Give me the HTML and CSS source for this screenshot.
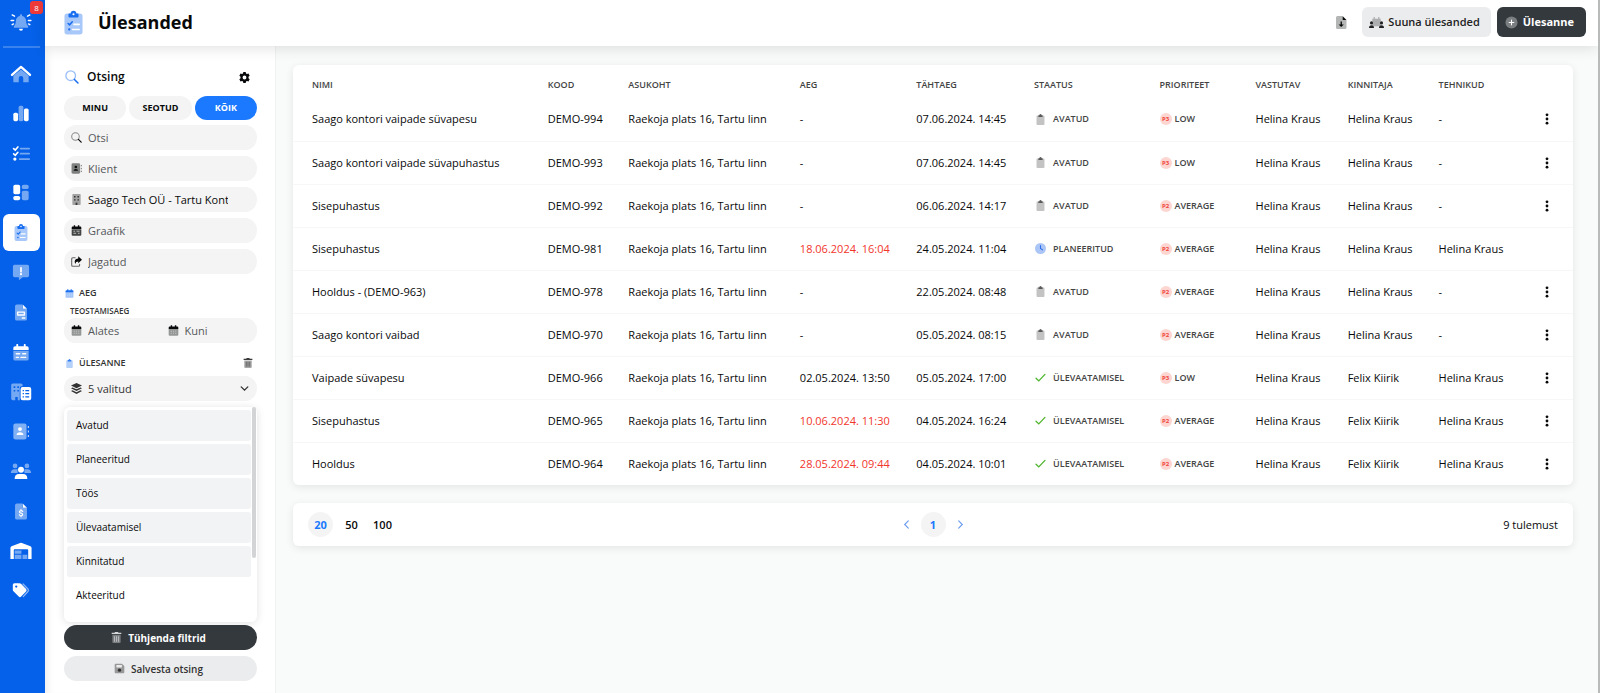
FILE: index.html
```
<!DOCTYPE html>
<html lang="et">
<head>
	<meta charset="UTF-8">
	<title>Ülesanded</title>
	<meta name="viewport" content="width=device-width, initial-scale=1.0">
	<link rel="stylesheet" href="styles.css">
</head>
<body>

	<!-- icon sprite -->
	<svg class="sprite" aria-hidden="true">
		<symbol id="i-bell" viewBox="0 0 24 20">
			<path opacity=".45" d="M12 1.500c.7 0 1.200.5 1.200 1.200v.6c2.700.5 4.500 2.700 4.500 5.400 0 3 .8 4.500 2 5.800.7.9.3 2-.9 2H5.200c-1.200 0-1.600-1.100-.9-2 1.200-1.300 2-2.800 2-5.800 0-2.700 1.800-4.900 4.500-5.400v-.6c0-.7.5-1.200 1.200-1.200z"/>
			<path d="M9.800 17.500h4.400a2.200 2.200 0 0 1-4.400 0z"/>
			<path d="M1 8.300h2.800M20.200 8.300H23M2.200 2.200l2.600 1.400M21.800 2.200l-2.600 1.400M2.200 13l1.500-.8M21.800 13l-1.500-.8" stroke="currentColor" stroke-width="1.600" stroke-linecap="round"/>
		</symbol>
		<symbol id="i-home" viewBox="0 0 24 20">
			<path opacity=".45" d="M12 5l8.500 7v7.300H14.500v-4.500a2.500 2.500 0 0 0-5 0v4.500h-6V12z"/>
			<path d="M2 11L12 2.200 22 11" fill="none" stroke="currentColor" stroke-width="2.600" stroke-linecap="round" stroke-linejoin="round"/>
		</symbol>
		<symbol id="i-chart" viewBox="0 0 20 20">
			<rect x="1" y="9" width="5.500" height="10" rx="1.800"/>
			<rect opacity=".45" x="7.200" y="1" width="5.600" height="18" rx="1.800"/>
			<rect x="13.500" y="4" width="5.500" height="15" rx="1.800"/>
		</symbol>
		<symbol id="i-list" viewBox="0 0 22 20">
			<path d="M2 4l2 1.800L7.200 2M2 10.500l2 1.800 3.200-3.800" fill="none" stroke="currentColor" stroke-width="2" stroke-linecap="round"/>
			<circle cx="3.500" cy="16.800" r="2"/>
			<path opacity=".45" d="M10.500 4H21M10.500 10.200H21M9.500 16.800H21" stroke="currentColor" stroke-width="2.200" stroke-linecap="round"/>
		</symbol>
		<symbol id="i-board" viewBox="0 0 20 20">
			<rect x="1" y="1" width="8" height="11" rx="2"/>
			<rect x="1" y="14" width="8" height="5" rx="2"/>
			<rect opacity=".45" x="11" y="1" width="8" height="5" rx="2"/>
			<rect opacity=".45" x="11" y="8" width="8" height="11" rx="2"/>
		</symbol>
		<symbol id="i-clip" viewBox="0 0 20 25">
			<rect opacity=".38" x=".5" y="3" width="19" height="22" rx="2.800"/>
			<path d="M7 3a3 3 0 0 1 6 0h1.500q.8 0 .8.800v2.400q0 1.100-1.100 1.100H5.800q-1.100 0-1.100-1.100V3.800q0-.8.8-.8z"/>
			<circle cx="10" cy="3.800" r="1.100" fill="#fff"/>
			<path d="M4.300 13.500l1.600 1.500 2.800-3.200" fill="none" stroke="currentColor" stroke-width="1.600" stroke-linecap="round"/>
			<circle cx="5.500" cy="19.800" r="1.200"/>
			<path d="M10.500 14.500H16M9 19.800h7" stroke="#fff" stroke-width="1.700" stroke-linecap="round"/>
		</symbol>
		<symbol id="i-bubble" viewBox="0 0 20 20">
			<path opacity=".45" d="M2.500 1h15q2 0 2 2v10.500q0 2-2 2H12L7.500 19v-3.500h-5q-2 0-2-2V3q0-2 2-2z"/>
			<path d="M10 4.500v4.500" stroke="currentColor" stroke-width="2" stroke-linecap="round"/>
			<circle cx="10" cy="12" r="1.300"/>
		</symbol>
		<symbol id="i-doc" viewBox="0 0 20 20">
			<path opacity=".45" d="M5 .5h6.500v5h5.500V17.500q0 2-2 2H5q-2 0-2-2v-15q0-2 2-2z"/>
			<path d="M12 .5l5 5h-5z"/>
			<path d="M6 9.500h8v3.500H6zM11.500 16.500h3" fill="none" stroke="currentColor" stroke-width="1.600" stroke-linejoin="round" stroke-linecap="round"/>
		</symbol>
		<symbol id="i-events" viewBox="0 0 20 20">
			<path opacity=".45" d="M1 8h18v9.500q0 2-2 2H3q-2 0-2-2z"/>
			<path d="M1 7V4.500q0-2 2-2h1.500V1a1 1 0 0 1 2.200 0v1.500h6.600V1a1 1 0 0 1 2.200 0v1.500H17q2 0 2 2V7z"/>
			<path d="M4.500 11.500h4M12 11.500h3.500M4.500 15.800h2.500M10 15.800h5.500" stroke="currentColor" stroke-width="1.600" stroke-linecap="round"/>
		</symbol>
		<symbol id="i-building" viewBox="0 0 26 22">
			<path opacity=".45" fill-rule="evenodd" d="M3 .5h10q2 0 2 2V4h-1.500Q11.500 4 11.500 6.500V21H9v-4H6v4H3q-2 0-2-2V2.500q0-2 2-2zM4 4v2h2V4zM8.500 4v2h2V4zM4 8.500v2h2v-2zM8.500 8.500v2h2v-2z"/>
			<path fill-rule="evenodd" d="M15 5h8q2.500 0 2.500 2.500v11q0 2.500-2.500 2.500h-8q-2.500 0-2.500-2.500v-11Q12.500 5 15 5zM15 8.500v1.500h1.600V8.500zM18.300 8.500v1.500H23V8.500zM15 12.300v1.500h1.600v-1.500zM18.300 12.300v1.500H23v-1.500zM15 16.100v1.500h1.600v-1.500zM18.300 16.100v1.500H23v-1.500z"/>
		</symbol>
		<symbol id="i-contact" viewBox="0 0 20 20">
			<rect opacity=".5" x="1" y=".5" width="15.500" height="19" rx="2.500"/>
			<circle cx="8.800" cy="7.200" r="2.300"/>
			<path d="M4.800 14.200q0-3.400 4-3.400t4 3.400z"/>
			<path opacity=".7" d="M18.700 3.500v2.500M18.700 8.800v2.500M18.700 14v2.500" stroke="currentColor" stroke-width="1.400"/>
		</symbol>
		<symbol id="i-users" viewBox="0 0 26 20">
			<g opacity=".45"><circle cx="6" cy="4" r="2.800"/><circle cx="20" cy="4" r="2.800"/><path d="M1 12.500q0-4.500 4.500-4.500H9v4.500zM25 12.500q0-4.500-4.500-4.500H17v4.500z"/></g>
			<circle cx="13" cy="8.500" r="3.500"/>
			<path d="M5.500 19.500q0-6 5-6h5q5 0 5 6z"/>
		</symbol>
		<symbol id="i-invoice" viewBox="0 0 20 20">
			<path opacity=".45" d="M5 .5h6.500v5H17v12q0 2-2 2H5q-2 0-2-2v-15q0-2 2-2z"/>
			<path d="M12 .5l5 5h-5z"/>
			<path d="M12 10q-.5-1-2-1t-1.800 1.300Q8.200 11.600 10 12t1.900 1.600q-.2 1.400-1.900 1.400t-2-1.200M10 7.800V9M10 15v1.200" fill="none" stroke="currentColor" stroke-width="1.400" stroke-linecap="round"/>
		</symbol>
		<symbol id="i-warehouse" viewBox="0 0 26 20">
			<path d="M.5 19.500V6.500q0-1.500 1.300-2L12 .5q1-.4 2 0l10.200 4q1.300.5 1.300 2v13h-4V9q0-1-1-1h-15q-1 0-1 1v10.500z"/>
			<path opacity=".45" d="M5.500 9.500h8v3.800h-8zM5.500 14.500h8v5h-8zM14.800 14.500h5.700v5h-5.700z"/>
		</symbol>
		<symbol id="i-tag" viewBox="0 0 22 20">
			<path fill-rule="evenodd" d="M1 3q0-2 2-2h6q1.200 0 2 .8l6.200 6.400q1.400 1.500 0 3l-6 6.200q-1.500 1.400-3 0L1.800 11Q1 10.200 1 9zM5.200 3.800a1.400 1.400 0 1 0 0 2.800 1.400 1.400 0 0 0 0-2.800z"/>
			<path opacity=".55" d="M13.500 2l6 6.200q1.400 1.500 0 3l-5.700 6.300" fill="none" stroke="currentColor" stroke-width="1.500" stroke-linecap="round"/>
		</symbol>
		<symbol id="i-search" viewBox="0 0 16 16">
			<circle opacity=".45" cx="6.500" cy="6.500" r="5.500" fill="none" stroke="currentColor" stroke-width="1.500"/>
			<path d="M10.800 10.800l4 4" stroke="currentColor" stroke-width="1.800" stroke-linecap="round"/>
		</symbol>
		<symbol id="i-gear" viewBox="0 0 16 16">
			<path fill-rule="evenodd" d="M6.300 0h3.400l.5 2.200 1.400.8 2.200-.7 1.700 3-1.700 1.500v2.400l1.700 1.500-1.700 3-2.200-.7-1.400.8-.5 2.200H6.300l-.5-2.200-1.400-.8-2.200.7-1.700-3 1.700-1.500V6.800L.5 5.300l1.700-3 2.200.7 1.400-.8zM8 5.200a2.800 2.800 0 1 0 0 5.600 2.800 2.800 0 0 0 0-5.600z"/>
		</symbol>
		<symbol id="i-flat" viewBox="0 0 16 16">
			<path opacity=".35" fill-rule="evenodd" d="M3 0h10q1 0 1 1v14q0 1-1 1H9.500v-3.500h-3V16H3q-1 0-1-1V1q0-1 1-1z"/>
			<path opacity=".8" d="M4.500 3h2v2h-2zM9.500 3h2v2h-2zM4.500 7.500h2v2h-2zM9.500 7.500h2v2h-2zM6.500 12.500h3V16h-3z"/>
		</symbol>
		<symbol id="i-schedule" viewBox="0 0 16 16">
			<path opacity=".75" d="M1 6.500h14V14q0 1.500-1.500 1.500h-11Q1 15.500 1 14z"/>
			<path d="M1 6V3.500Q1 2 2.500 2H4V.5h2V2h4V.5h2V2h1.500Q15 2 15 3.500V6z"/>
			<path d="M3.500 9H6M8 9h4.500M3.500 12h4M10 12h2.500" stroke="#ccc" stroke-width="1.300"/>
		</symbol>
		<symbol id="i-cal" viewBox="0 0 16 16">
			<path opacity=".4" d="M1 6.500h14V14q0 1.500-1.500 1.500h-11Q1 15.500 1 14z"/>
			<path d="M1 6V3.500Q1 2 2.500 2H4V.5h2V2h4V.5h2V2h1.500Q15 2 15 3.500V6z"/>
			<path d="M4 9h8M4 12h8" stroke="#fff" stroke-opacity=".5" stroke-width="1.300" stroke-dasharray="1.600 1.600"/>
		</symbol>
		<symbol id="i-share" viewBox="0 0 16 16">
			<path opacity=".6" d="M6 2.500H2.500Q1 2.500 1 4v9.500Q1 15 2.500 15H11q1.500 0 1.500-1.500V12" fill="none" stroke="currentColor" stroke-width="1.600" stroke-linecap="round"/>
			<path d="M10.500.5L16 5.500l-5.500 5V8Q7 8 6 11.500 3.500 4 10.500 3.500z"/>
		</symbol>
		<symbol id="i-trash" viewBox="0 0 16 16">
			<path opacity=".35" d="M2 4h12v10.500q0 1.500-1.500 1.500h-9Q2 16 2 14.500z"/>
			<path opacity=".8" d="M1 1.200h4L6 0h4l1 1.200h4V3H1z"/>
			<path opacity=".55" d="M4.500 6h1.200v8H4.500zM7.400 6h1.200v8H7.400zM10.300 6h1.200v8h-1.200z"/>
		</symbol>
		<symbol id="i-layers" viewBox="0 0 16 16">
			<path d="M8 0l8 3.800-8 3.800L0 3.800z"/>
			<path d="M2.200 6.500L8 9.200l5.800-2.700L16 7.600l-8 3.900-8-3.900zM2.200 10.700L8 13.400l5.800-2.700 2.200 1.100L8 16l-8-4.200z"/>
		</symbol>
		<symbol id="i-save" viewBox="0 0 16 16">
			<path opacity=".45" fill-rule="evenodd" d="M2.500 1h9L15 4.500v9q0 1.500-1.500 1.500h-11Q1 15 1 13.500v-11Q1 1 2.500 1zM3.500 3v3.500h8V3z"/>
			<circle cx="8" cy="10.500" r="2.400"/>
		</symbol>
		<symbol id="i-task" viewBox="0 0 16 18">
			<path opacity=".32" d="M3 2.500h10q1.500 0 1.500 1.500v12.500q0 1.500-1.500 1.500H3q-1.500 0-1.500-1.500V4q0-1.500 1.500-1.500z"/>
			<path opacity=".85" d="M6.200 2a1.800 1.800 0 0 1 3.600 0h1.700V5h-7V2z"/>
		</symbol>
		<symbol id="i-clock" viewBox="0 0 16 16">
			<circle opacity=".4" cx="8" cy="8" r="8"/>
			<path d="M8 3.500V8l3 2" fill="none" stroke="currentColor" stroke-width="1.500" stroke-linecap="round"/>
		</symbol>
		<symbol id="i-check" viewBox="0 0 16 16">
			<path d="M1.500 9L5.500 13 14.500 3.500" fill="none" stroke="currentColor" stroke-width="1.900" stroke-linecap="round"/>
		</symbol>
		<symbol id="i-dots" viewBox="0 0 4 12">
			<circle cx="2" cy="1.800" r="1.400"/><circle cx="2" cy="6" r="1.400"/><circle cx="2" cy="10.200" r="1.400"/>
		</symbol>
		<symbol id="i-down" viewBox="0 0 10 10">
			<path d="M2 3.500L5 6.500l3-3" fill="none" stroke="currentColor" stroke-width="1.200" stroke-linecap="round"/>
		</symbol>
		<symbol id="i-left" viewBox="0 0 10 10">
			<path d="M7 1L3 5l4 4" fill="none" stroke="currentColor" stroke-width="1.300" stroke-linecap="round"/>
		</symbol>
		<symbol id="i-right" viewBox="0 0 10 10">
			<path d="M3 1l4 4-4 4" fill="none" stroke="currentColor" stroke-width="1.300" stroke-linecap="round"/>
		</symbol>
		<symbol id="i-export" viewBox="0 0 12 14">
			<path opacity=".3" d="M2.500 1H7v4h4.500v7.500q0 1.500-1.500 1.500H2.500Q1 14 1 12.500v-10Q1 1 2.500 1z"/>
			<path d="M7.500 1l4 4h-4zM5.600 6.500h1.300v3h1.900L6.200 12 3.600 9.500h2z"/>
		</symbol>
		<symbol id="i-assign" viewBox="0 0 18 14">
			<path opacity=".3" d="M4 2.500h10v9H4zM5.500.5h1.500v2H5.500zM11 .5h1.500v2H11z"/>
			<circle cx="3" cy="7.500" r="1.900"/><circle cx="15" cy="7.500" r="1.900"/>
			<path d="M0 13.500Q0 10.300 3 10.300t3 3.200zM12 13.500q0-3.200 3-3.200t3 3.200z"/>
		</symbol>
		<symbol id="i-plus" viewBox="0 0 14 14">
			<circle opacity=".35" cx="7" cy="7" r="6.500"/>
			<path d="M7 4.500v5M4.500 7h5" stroke="currentColor" stroke-width="1.200" stroke-linecap="round"/>
		</symbol>
	</svg>

	<nav class="sidebar">
		<a class="bell" href="#" aria-label="Teavitused">
			<svg class="icon-l"><use href="#i-bell"/></svg>
			<span class="badge">8</span>
		</a>
		<div class="menu">
			<a href="#" aria-label="Avaleht"><svg class="icon-l"><use href="#i-home"/></svg></a>
			<a href="#" aria-label="Statistika"><svg class="icon-m"><use href="#i-chart"/></svg></a>
			<a href="#" aria-label="Nimekiri"><svg class="icon-m"><use href="#i-list"/></svg></a>
			<a href="#" aria-label="Töölaud"><svg class="icon-m"><use href="#i-board"/></svg></a>
			<a href="#" aria-label="Ülesanded" class="active"><svg class="icon-m"><use href="#i-clip"/></svg></a>
			<a href="#" aria-label="Teated"><svg class="icon-m"><use href="#i-bubble"/></svg></a>
			<a href="#" aria-label="Dokumendid"><svg class="icon-m"><use href="#i-doc"/></svg></a>
			<a href="#" aria-label="Kalender"><svg class="icon-m"><use href="#i-events"/></svg></a>
			<a href="#" aria-label="Objektid"><svg class="icon-l"><use href="#i-building"/></svg></a>
			<a href="#" aria-label="Kontaktid"><svg class="icon-m"><use href="#i-contact"/></svg></a>
			<a href="#" aria-label="Kasutajad"><svg class="icon-l"><use href="#i-users"/></svg></a>
			<a href="#" aria-label="Arved"><svg class="icon-m"><use href="#i-invoice"/></svg></a>
			<a href="#" aria-label="Ladu"><svg class="icon-l"><use href="#i-warehouse"/></svg></a>
			<a href="#" aria-label="Sildid"><svg class="icon-m"><use href="#i-tag"/></svg></a>
		</div>
	</nav>

	<div class="page">
		<header class="header">
			<svg class="logo"><use href="#i-clip"/></svg>
			<h1>Ülesanded</h1>
			<button class="export" aria-label="Ekspordi"><svg><use href="#i-export"/></svg></button>
			<button class="btn"><svg class="assign"><use href="#i-assign"/></svg>Suuna ülesanded</button>
			<button class="btn btn-dark"><svg class="plus"><use href="#i-plus"/></svg>Ülesanne</button>
		</header>

		<div class="content">
			<aside class="filters">
				<div class="filters-title">
					<svg class="blue"><use href="#i-search"/></svg>
					<h2>Otsing</h2>
					<button class="plain" aria-label="Seaded"><svg><use href="#i-gear"/></svg></button>
				</div>
				<div class="tabs">
					<button>MINU</button>
					<button>SEOTUD</button>
					<button class="active">KÕIK</button>
				</div>
				<div class="fields">
					<label class="field"><svg><use href="#i-search"/></svg><input type="text" placeholder="Otsi" aria-label="Otsi"></label>
					<label class="field"><svg><use href="#i-contact"/></svg><input type="text" placeholder="Klient" aria-label="Klient"></label>
					<label class="field"><svg><use href="#i-flat"/></svg><input type="text" value="Saago Tech OÜ - Tartu Kontor" aria-label="Asukoht"></label>
					<label class="field"><svg><use href="#i-schedule"/></svg><input type="text" placeholder="Graafik" aria-label="Graafik"></label>
					<label class="field"><svg><use href="#i-share"/></svg><input type="text" placeholder="Jagatud" aria-label="Jagatud"></label>
				</div>
				<div class="group-title">
					<svg class="blue"><use href="#i-cal"/></svg>
					<h3>AEG</h3>
				</div>
				<h4>TEOSTAMISAEG</h4>
				<div class="range">
					<label class="field"><svg><use href="#i-cal"/></svg><input type="text" placeholder="Alates" aria-label="Alates"></label>
					<label class="field"><svg><use href="#i-cal"/></svg><input type="text" placeholder="Kuni" aria-label="Kuni"></label>
				</div>
				<div class="group-title task-title">
					<svg class="blue"><use href="#i-task"/></svg>
					<h3>ÜLESANNE</h3>
					<button class="plain" aria-label="Kustuta"><svg><use href="#i-trash"/></svg></button>
				</div>
				<label class="field select">
					<svg><use href="#i-layers"/></svg>
					<select aria-label="Staatus"><option>5 valitud</option></select>
					<svg><use href="#i-down"/></svg>
				</label>
				<ul class="options" role="listbox" aria-label="Staatus" aria-multiselectable="true">
					<li role="option" aria-selected="true">Avatud</li>
					<li role="option" aria-selected="true">Planeeritud</li>
					<li role="option" aria-selected="true">Töös</li>
					<li role="option" aria-selected="true">Ülevaatamisel</li>
					<li role="option" aria-selected="true">Kinnitatud</li>
					<li role="option" aria-selected="false">Akteeritud</li>
				</ul>
				<div class="actions">
					<button class="pill pill-dark"><svg><use href="#i-trash"/></svg>Tühjenda filtrid</button>
					<button class="pill"><svg><use href="#i-save"/></svg>Salvesta otsing</button>
				</div>
			</aside>

			<main>
				<div class="card">
					<table>
						<colgroup>
							<col class="c-name"><col class="c-code"><col class="c-place"><col class="c-time"><col class="c-due">
							<col class="c-status"><col class="c-prio"><col class="c-owner"><col class="c-approver"><col class="c-tech"><col>
						</colgroup>
						<thead>
							<tr>
								<th>NIMI</th>
								<th>KOOD</th>
								<th>ASUKOHT</th>
								<th>AEG</th>
								<th>TÄHTAEG</th>
								<th>STAATUS</th>
								<th>PRIORITEET</th>
								<th>VASTUTAV</th>
								<th>KINNITAJA</th>
								<th>TEHNIKUD</th>
								<th></th>
							</tr>
						</thead>
						<tbody>
							<tr>
								<td>Saago kontori vaipade süvapesu</td>
								<td>DEMO-994</td>
								<td>Raekoja plats 16, Tartu linn</td>
								<td>-</td>
								<td>07.06.2024. 14:45</td>
								<td><span class="status"><svg><use href="#i-task"/></svg>AVATUD</span></td>
								<td><span class="prio"><i>P3</i>LOW</span></td>
								<td>Helina Kraus</td>
								<td>Helina Kraus</td>
								<td>-</td>
								<td><button class="more" aria-label="Valikud"><svg><use href="#i-dots"/></svg></button></td>
							</tr>
							<tr>
								<td>Saago kontori vaipade süvapuhastus</td>
								<td>DEMO-993</td>
								<td>Raekoja plats 16, Tartu linn</td>
								<td>-</td>
								<td>07.06.2024. 14:45</td>
								<td><span class="status"><svg><use href="#i-task"/></svg>AVATUD</span></td>
								<td><span class="prio"><i>P3</i>LOW</span></td>
								<td>Helina Kraus</td>
								<td>Helina Kraus</td>
								<td>-</td>
								<td><button class="more" aria-label="Valikud"><svg><use href="#i-dots"/></svg></button></td>
							</tr>
							<tr>
								<td>Sisepuhastus</td>
								<td>DEMO-992</td>
								<td>Raekoja plats 16, Tartu linn</td>
								<td>-</td>
								<td>06.06.2024. 14:17</td>
								<td><span class="status"><svg><use href="#i-task"/></svg>AVATUD</span></td>
								<td><span class="prio"><i>P2</i>AVERAGE</span></td>
								<td>Helina Kraus</td>
								<td>Helina Kraus</td>
								<td>-</td>
								<td><button class="more" aria-label="Valikud"><svg><use href="#i-dots"/></svg></button></td>
							</tr>
							<tr>
								<td>Sisepuhastus</td>
								<td>DEMO-981</td>
								<td>Raekoja plats 16, Tartu linn</td>
								<td class="late">18.06.2024. 16:04</td>
								<td>24.05.2024. 11:04</td>
								<td><span class="status planned"><svg><use href="#i-clock"/></svg>PLANEERITUD</span></td>
								<td><span class="prio"><i>P2</i>AVERAGE</span></td>
								<td>Helina Kraus</td>
								<td>Helina Kraus</td>
								<td>Helina Kraus</td>
								<td></td>
							</tr>
							<tr>
								<td>Hooldus - (DEMO-963)</td>
								<td>DEMO-978</td>
								<td>Raekoja plats 16, Tartu linn</td>
								<td>-</td>
								<td>22.05.2024. 08:48</td>
								<td><span class="status"><svg><use href="#i-task"/></svg>AVATUD</span></td>
								<td><span class="prio"><i>P2</i>AVERAGE</span></td>
								<td>Helina Kraus</td>
								<td>Helina Kraus</td>
								<td>-</td>
								<td><button class="more" aria-label="Valikud"><svg><use href="#i-dots"/></svg></button></td>
							</tr>
							<tr>
								<td>Saago kontori vaibad</td>
								<td>DEMO-970</td>
								<td>Raekoja plats 16, Tartu linn</td>
								<td>-</td>
								<td>05.05.2024. 08:15</td>
								<td><span class="status"><svg><use href="#i-task"/></svg>AVATUD</span></td>
								<td><span class="prio"><i>P2</i>AVERAGE</span></td>
								<td>Helina Kraus</td>
								<td>Helina Kraus</td>
								<td>-</td>
								<td><button class="more" aria-label="Valikud"><svg><use href="#i-dots"/></svg></button></td>
							</tr>
							<tr>
								<td>Vaipade süvapesu</td>
								<td>DEMO-966</td>
								<td>Raekoja plats 16, Tartu linn</td>
								<td>02.05.2024. 13:50</td>
								<td>05.05.2024. 17:00</td>
								<td><span class="status review"><svg><use href="#i-check"/></svg>ÜLEVAATAMISEL</span></td>
								<td><span class="prio"><i>P3</i>LOW</span></td>
								<td>Helina Kraus</td>
								<td>Felix Kiirik</td>
								<td>Helina Kraus</td>
								<td><button class="more" aria-label="Valikud"><svg><use href="#i-dots"/></svg></button></td>
							</tr>
							<tr>
								<td>Sisepuhastus</td>
								<td>DEMO-965</td>
								<td>Raekoja plats 16, Tartu linn</td>
								<td class="late">10.06.2024. 11:30</td>
								<td>04.05.2024. 16:24</td>
								<td><span class="status review"><svg><use href="#i-check"/></svg>ÜLEVAATAMISEL</span></td>
								<td><span class="prio"><i>P2</i>AVERAGE</span></td>
								<td>Helina Kraus</td>
								<td>Felix Kiirik</td>
								<td>Helina Kraus</td>
								<td><button class="more" aria-label="Valikud"><svg><use href="#i-dots"/></svg></button></td>
							</tr>
							<tr>
								<td>Hooldus</td>
								<td>DEMO-964</td>
								<td>Raekoja plats 16, Tartu linn</td>
								<td class="late">28.05.2024. 09:44</td>
								<td>04.05.2024. 10:01</td>
								<td><span class="status review"><svg><use href="#i-check"/></svg>ÜLEVAATAMISEL</span></td>
								<td><span class="prio"><i>P2</i>AVERAGE</span></td>
								<td>Helina Kraus</td>
								<td>Felix Kiirik</td>
								<td>Helina Kraus</td>
								<td><button class="more" aria-label="Valikud"><svg><use href="#i-dots"/></svg></button></td>
							</tr>
						</tbody>
					</table>
				</div>

				<div class="card pager">
					<div class="sizes">
						<button class="active">20</button>
						<button>50</button>
						<button>100</button>
					</div>
					<div class="pages">
						<button class="arrow" aria-label="Eelmine"><svg><use href="#i-left"/></svg></button>
						<button class="active">1</button>
						<button class="arrow" aria-label="Järgmine"><svg><use href="#i-right"/></svg></button>
					</div>
					<p>9 tulemust</p>
				</div>
			</main>
		</div>
	</div>

</body>
</html>
```

FILE: styles.css
```
* {
	box-sizing: border-box;
}
body {
	background: #f9fafa;
	border-right: 2px solid #b9bbbb;
	color: #08090a;
	display: flex;
	font-family: "Open Sans", "Noto Sans", sans-serif;
	font-size: 11px;
	line-height: 16px;
	margin: 0;
	min-height: 100vh;
}
h1, h2, h3, h4, p, ul {
	margin: 0;
	padding: 0;
}
button, input, select {
	background: none;
	border: 0;
	color: inherit;
	font: inherit;
	margin: 0;
	padding: 0;
}
button {
	cursor: pointer;
}
svg {
	display: block;
	fill: currentColor;
	flex: none;
	height: 11px;
	width: 11px;
}
.sprite {
	height: 0;
	position: absolute;
	width: 0;
}
.blue {
	color: #1a6ff0;
}

/* sidebar */
.sidebar {
	background: #0561e9;
	color: #fff;
	flex: none;
	padding: 0 5px 0 3px;
	width: 45px;
}
.sidebar a {
	align-items: center;
	border-radius: 6px;
	color: #fff;
	display: flex;
	height: 37px;
	justify-content: center;
	padding-right: 1px;
}
.sidebar .bell {
	border-bottom: 2px solid #3a82ee;
	border-radius: 0;
	height: 48px;
	padding-bottom: 2px;
	position: relative;
}
.badge {
	background: #f03a3a;
	border-radius: 3px;
	font-size: 8px;
	height: 13px;
	line-height: 13px;
	position: absolute;
	right: -3px;
	text-align: center;
	top: 1px;
	width: 13px;
}
.menu {
	display: flex;
	flex-direction: column;
	height: 80vh;
	justify-content: space-between;
	margin-top: 7px;
	min-height: 530px;
}
.sidebar .active {
	background: #fff;
	color: #1a6ff0;
}
.icon-l {
	height: 18px;
	width: 22px;
}
.icon-m {
	height: 17px;
	width: 18px;
}

/* header */
.page {
	display: flex;
	flex: 1;
	flex-direction: column;
	min-width: 0;
}
.header {
	align-items: center;
	background: #fff;
	box-shadow: 0 2px 14px rgba(0,0,0,.12);
	display: flex;
	height: 46px;
	padding: 0 12px 2px 19px;
	position: relative;
}
.logo {
	color: #1a6ff0;
	height: 25px;
	width: 19px;
}
h1 {
	flex: 1;
	font-size: 18px;
	font-weight: 700;
	line-height: 24px;
	margin-left: 15px;
}
.export {
	margin-right: 15px;
}
.export svg {
	height: 14px;
	width: 12px;
}
.btn {
	align-items: center;
	background: #ebecee;
	border-radius: 6px;
	color: #222;
	display: flex;
	font-weight: 600;
	height: 30px;
	padding: 0 11px 0 7px;
}
.btn svg {
	margin-right: 4px;
}
.btn .assign {
	height: 13px;
	width: 15px;
}
.btn .plus {
	height: 13px;
	margin-right: 5px;
	width: 13px;
}
.btn-dark {
	background: #34393d;
	color: #fff;
	font-weight: 700;
	margin-left: 6px;
	padding: 0 12px 0 8px;
}

/* filters */
.content {
	display: flex;
	flex: 1;
}
.filters {
	background: #fff;
	border-right: 1px solid #f0f1f1;
	box-shadow: inset 8px 0 8px -6px rgba(0,0,0,.08);
	flex: none;
	padding: 20px 18px 12px 19px;
	width: 231px;
}
.filters-title {
	align-items: center;
	display: flex;
	height: 22px;
	padding: 0 7px 0 1px;
}
.filters-title svg {
	height: 14px;
	width: 14px;
}
.filters-title .plain svg {
	height: 11px;
	width: 11px;
}
h2 {
	flex: 1;
	font-size: 12px;
	font-weight: 600;
	margin-left: 8px;
}
.tabs {
	display: flex;
	gap: 3px;
	margin-top: 8px;
}
.tabs button {
	background: #f4f4f4;
	border-radius: 12px;
	flex: 1;
	font-size: 9px;
	font-weight: 700;
	height: 24px;
}
.tabs .active {
	background: #1b79ff;
	color: #fff;
}
.fields {
	display: flex;
	flex-direction: column;
	gap: 6px;
	margin-top: 5px;
}
.field {
	align-items: center;
	background: #f4f4f4;
	border-radius: 12px;
	display: flex;
	gap: 6px;
	height: 25px;
	padding: 0 29px 0 7px;
}
.field input,
.field select {
	appearance: none;
	flex: 1;
	min-width: 0;
	outline: 0;
}
.field input::placeholder {
	color: #55585a;
	opacity: 1;
}
.group-title {
	align-items: center;
	display: flex;
	gap: 5px;
	margin-top: 11px;
	padding: 0 4px 0 1px;
}
.group-title .blue {
	height: 9px;
	width: 9px;
}
h3 {
	color: #333;
	flex: 1;
	font-size: 9px;
	font-weight: 600;
}
h4 {
	color: #333;
	font-size: 8px;
	font-weight: 600;
	line-height: 15px;
	margin: 2px 6px 0;
}
.range {
	background: #f4f4f4;
	border-radius: 12px;
	display: flex;
}
.range .field {
	flex: 1;
	min-width: 0;
	padding-right: 0;
}
.task-title {
	margin-top: 12px;
}
.plain svg {
	height: 10px;
	width: 10px;
}
.select {
	color: #333;
	margin-top: 5px;
	padding-right: 7px;
}
.options {
	border-radius: 6px;
	box-shadow: 0 1px 8px rgba(0,0,0,.12);
	display: flex;
	flex-direction: column;
	font-size: 10px;
	font-weight: 500;
	gap: 3px;
	list-style: none;
	margin-top: 6px;
	padding: 3px 6px 11px 3px;
	position: relative;
}
.options::after {
	background: #d3d4d5;
	border-radius: 2px;
	content: "";
	height: 70%;
	position: absolute;
	right: 1px;
	top: 0;
	width: 4px;
}
.options li {
	border-radius: 3px;
	line-height: 31px;
	padding-left: 9px;
}
.options [aria-selected="true"] {
	background: #f2f3f4;
}
.actions {
	display: flex;
	flex-direction: column;
	gap: 6px;
	margin-top: 3px;
}
.pill {
	align-items: center;
	background: #ebeced;
	border-radius: 13px;
	color: #333;
	display: flex;
	font-size: 10px;
	font-weight: 600;
	gap: 6px;
	height: 25px;
	justify-content: center;
	padding-right: 4px;
}
.pill-dark {
	background: #34393d;
	color: #fff;
	font-weight: 700;
}

/* task table */
main {
	flex: 1;
	min-width: 0;
	padding: 19px 25px 19px 17px;
}
.card {
	background: #fff;
	border-radius: 6px;
	box-shadow: 0 2px 8px rgba(0,0,0,.09);
}
table {
	border-collapse: collapse;
	table-layout: fixed;
	width: 100%;
}
.c-name {
	width: 19.9%;
}
.c-code {
	width: 6.3%;
}
.c-place {
	width: 13.4%;
}
.c-time {
	width: 9.1%;
}
.c-due {
	width: 9.2%;
}
.c-status {
	width: 9.8%;
}
.c-prio {
	width: 7.5%;
}
.c-owner {
	width: 7.2%;
}
.c-approver {
	width: 7.1%;
}
.c-tech {
	width: 6.4%;
}
th, td {
	padding: 0;
	text-align: left;
	white-space: nowrap;
}
th:first-child,
td:first-child {
	padding-left: 19px;
}
th {
	color: #444;
	font-size: 9px;
	font-weight: 600;
	height: 33px;
	padding-top: 7px;
}
td {
	height: 43px;
}
td:first-child {
	font-weight: 500;
}
tbody tr + tr {
	border-top: 1px solid #f7f7f7;
}
.late {
	color: #f2352b;
}
.status,
.prio {
	align-items: center;
	color: #444;
	display: flex;
	font-size: 9px;
	font-weight: 600;
}
.status svg {
	margin: 0 7px 0 1px;
}
.planned svg {
	color: #2b6de8;
}
.review svg {
	color: #4fb52c;
}
.prio i {
	background: #fdd5d1;
	border-radius: 50%;
	color: #f0443a;
	font-size: 6px;
	font-style: normal;
	font-weight: 700;
	line-height: 12px;
	margin-right: 3px;
	text-align: center;
	width: 12px;
}
.more {
	display: block;
	margin: 0 auto;
}
.more svg {
	height: 12px;
	width: 4px;
}

/* pager */
.pager {
	align-items: center;
	display: grid;
	font-weight: 600;
	grid-template-columns: 1fr auto 1fr;
	height: 43px;
	margin-top: 18px;
	padding: 0 15px;
}
.pager button {
	border-radius: 13px;
	height: 25px;
	min-width: 25px;
	padding: 0 3px;
}
.pager .active {
	background: #f4f4f4;
	color: #1b79ff;
	font-weight: 700;
}
.sizes,
.pages {
	display: flex;
	gap: 6px;
}
.pages {
	gap: 2px;
}
.arrow svg {
	color: #6b9df0;
	height: 9px;
	margin: 0 auto;
	width: 9px;
}
.pager p {
	font-weight: 500;
	text-align: right;
}
```
